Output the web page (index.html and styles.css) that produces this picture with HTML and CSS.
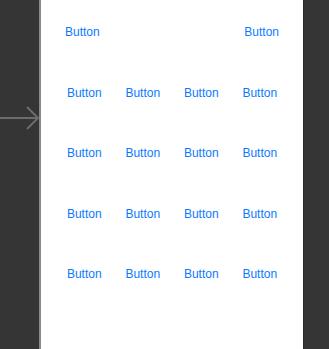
FILE: index.html
```html
<!DOCTYPE html>
<html lang="en">
<head>
    <meta charset="UTF-8">
    <meta name="viewport" content="width=device-width, initial-scale=1.0">
    <title>Buttons Scene</title>
    <link rel="stylesheet" href="styles.css">
</head>
<body>
    <div class="canvas">
        <div class="entry">
            <svg class="entry-arrow" width="40" height="24" viewBox="0 0 40 24">
                <path d="M0 12 H38 M27 1 L38 12 L27 23" fill="none" stroke="#6c6c6c" stroke-width="2"/>
            </svg>
        </div>
        <div class="scene">
            <div class="row row-top">
                <button class="btn">Button</button>
                <button class="btn">Button</button>
            </div>
            <div class="grid">
                <button class="btn">Button</button>
                <button class="btn">Button</button>
                <button class="btn">Button</button>
                <button class="btn">Button</button>
                <button class="btn">Button</button>
                <button class="btn">Button</button>
                <button class="btn">Button</button>
                <button class="btn">Button</button>
                <button class="btn">Button</button>
                <button class="btn">Button</button>
                <button class="btn">Button</button>
                <button class="btn">Button</button>
                <button class="btn">Button</button>
                <button class="btn">Button</button>
                <button class="btn">Button</button>
                <button class="btn">Button</button>
            </div>
        </div>
    </div>
</body>
</html>
```

FILE: styles.css
```css
* {
    margin: 0;
    padding: 0;
    box-sizing: border-box;
}
body {
    background: #353535;
    font-family: "Liberation Sans", Arial, sans-serif;
    overflow: hidden;
}
.canvas {
    display: flex;
    height: 349px;
}
.entry {
    width: 39px;
    padding-top: 106px;
}
.entry-arrow {
    display: block;
}
.scene {
    width: 265px;
    height: 100%;
    background: #ffffff;
    border-left: 2px solid #8a8a8a;
    border-right: 1px solid #2a2a2a;
    padding-top: 2px;
}
.row-top {
    display: flex;
    justify-content: space-between;
    align-items: center;
    height: 60.5px;
    padding: 0 24px;
}
.grid {
    display: grid;
    grid-template-columns: repeat(4, 1fr);
    grid-auto-rows: 60.5px;
    align-items: center;
    justify-items: center;
    padding: 0 14px;
}
.btn {
    background: none;
    border: none;
    font-family: inherit;
    font-size: 12px;
    color: #0a7aff;
    line-height: 14px;
}
```
